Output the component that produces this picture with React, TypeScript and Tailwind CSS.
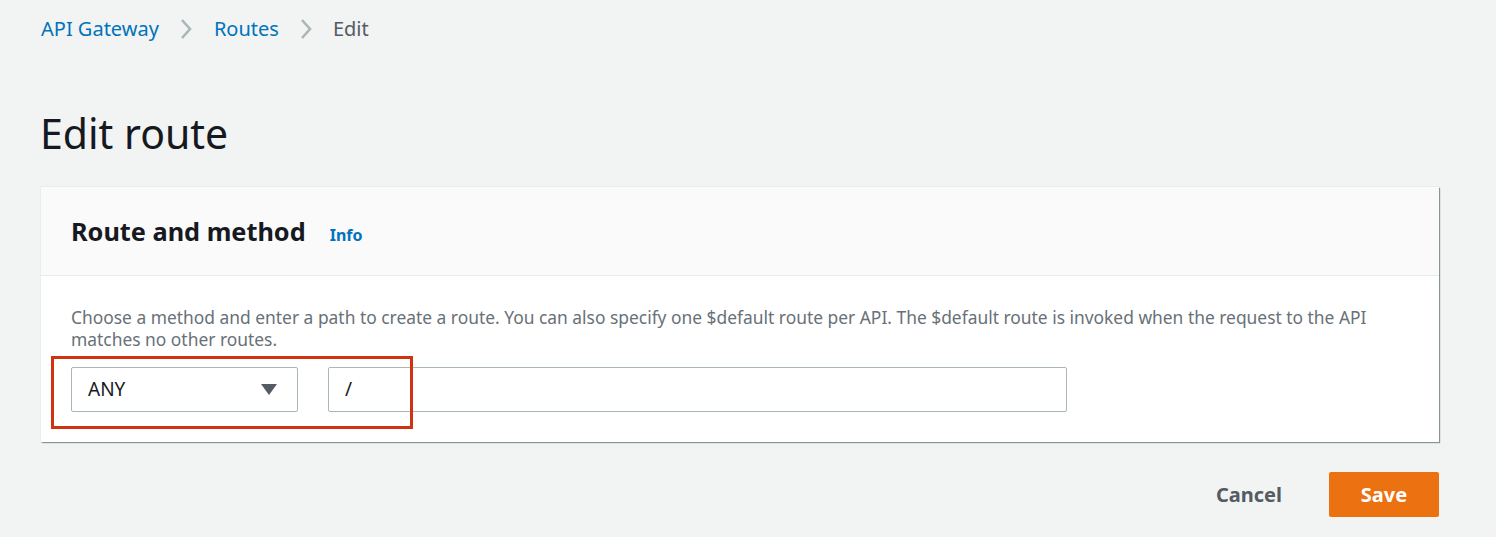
import React from "react";

const Chevron = () => (
  <svg width="14" height="22" viewBox="0 0 14 22" className="shrink-0">
    <path d="M3 2 L11 11 L3 20" fill="none" stroke="#aab7b8" strokeWidth="2.6" />
  </svg>
);

export default function App() {
  return (
    <div
      className="w-[1496px] h-[537px] bg-[#f2f3f3] overflow-hidden"
      style={{ fontFamily: '"Noto Sans", "Open Sans", Arial, sans-serif' }}
    >
      <div className="pl-[41px] pr-[57px]">
        {/* Breadcrumb */}
        <div className="flex items-center h-[58px] pb-[1px] text-[20px]">
          <span className="text-[#0073bb]">API Gateway</span>
          <span className="ml-[20px] mr-[21px] flex items-center"><Chevron /></span>
          <span className="text-[#0073bb]">Routes</span>
          <span className="ml-[20px] mr-[20px] flex items-center"><Chevron /></span>
          <span className="text-[#545b64]">Edit</span>
        </div>

        {/* Title */}
        <h1 className="text-[41px] leading-[48px] text-[#16191f] mt-[51px] mb-[30px] -ml-[1px]">Edit route</h1>

        {/* Card */}
        <div className="bg-white shadow-[1px_1px_1px_0_#879596,0_0_0_1px_#eaeded]">
          <div className="bg-[#fafafa] h-[89px] border-b border-[#eaeded] flex items-center px-[30px] pt-[2px]">
            <h2 className="text-[25.3px] font-bold text-[#16191f]">Route and method</h2>
            <span className="ml-[24px] mt-[5px] text-[16px] font-bold text-[#0073bb]">Info</span>
          </div>
          <div className="px-[30px] pt-[30px] pb-[30px]">
            <p className="text-[17.4px] leading-[22px] text-[#687078]">
              Choose a method and enter a path to create a route. You can also specify one $default route per API. The $default route is invoked when the request to the API matches no other routes.
            </p>
            <div className="relative flex gap-[30px] mt-[17px]">
              <div className="w-[227px] h-[45px] border border-[#aab7b8] rounded-[2px] flex items-center justify-between pl-[16px] pr-[20px] text-[19px] text-[#16191f]">
                <span>ANY</span>
                <svg width="16" height="12" viewBox="0 0 16 12">
                  <path d="M0 0 H16 L8 11 Z" fill="#545b64" />
                </svg>
              </div>
              <div className="w-[739px] h-[45px] border border-[#aab7b8] rounded-[2px] flex items-center pl-[16px] text-[19px] text-[#16191f]">
                /
              </div>
              <div className="absolute left-[-20px] top-[-11px] w-[362px] h-[73px] border-[3px] border-[#d13212] pointer-events-none" />
            </div>
          </div>
        </div>

        {/* Actions */}
        <div className="flex justify-end items-center mt-[30px] gap-[47px]">
          <span className="text-[20px] font-bold text-[#545b64]">Cancel</span>
          <button className="w-[110px] h-[45px] bg-[#ec7211] rounded-[2px] text-white text-[20px] font-bold">
            Save
          </button>
        </div>
      </div>
    </div>
  );
}
